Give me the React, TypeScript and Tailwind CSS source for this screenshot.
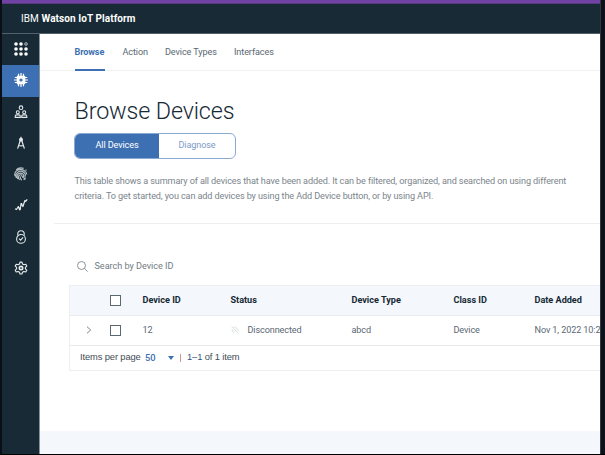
import React from "react";

const sans = "font-[Roboto,'Noto_Sans',sans-serif]";

function AppsIcon() {
  const dots: React.ReactNode[] = [];
  for (let r = 0; r < 3; r++) {
    for (let c = 0; c < 3; c++) {
      const hollow = r === 0 && c === 2;
      dots.push(
        <circle key={r * 3 + c} cx={2 + c * 5} cy={2 + r * 5} r={hollow ? 1.3 : 1.8}
          fill={hollow ? "none" : "#fff"} stroke={hollow ? "#c5ced3" : "none"} strokeWidth={0.9} />
      );
    }
  }
  return <svg width="14" height="14" viewBox="0 0 14 14">{dots}</svg>;
}

function ChipIcon() {
  return (
    <svg width="14" height="14" viewBox="0 0 14 14">
      <path d="M4.500 .8v12.400M7 0v14M9.500 .8v12.400M.8 4.500h12.400M0 7h14M.8 9.500h12.400" stroke="#fff" strokeWidth="1.200" />
      <rect x="2.700" y="2.700" width="8.600" height="8.600" rx="1" fill="#fff" />
      <circle cx="7" cy="7" r="1.600" fill="#3d70b2" />
    </svg>
  );
}

function MembersIcon() {
  return (
    <svg width="14" height="14" viewBox="0 0 14 14" fill="none" stroke="#e4e9eb" strokeWidth="1.1">
      <circle cx="7" cy="2.700" r="1.800" />
      <circle cx="3.800" cy="7.300" r="1.500" />
      <circle cx="10.200" cy="7.300" r="1.500" />
      <path d="M1.200 12.400v-1.200q0-1.300 1.400-1.300h2.400q1.300 0 1.300 1.300v1.200zM7.700 12.400v-1.200q0-1.300 1.300-1.300h2.400q1.400 0 1.400 1.300v1.200z" />
    </svg>
  );
}

function CompassIcon() {
  return (
    <svg width="14" height="14" viewBox="0 0 14 14" fill="none" stroke="#e4e9eb" strokeWidth="1.2">
      <path d="M7 0.8v1.6" />
      <circle cx="7" cy="3.8" r="1.4" fill="#e4e9eb" />
      <path d="M6.1 5L3.6 12.6M7.9 5l2.5 7.6M4.4 9.2q2.6 1.3 5.2 0" />
    </svg>
  );
}

function FingerprintIcon() {
  return (
    <svg width="14" height="14" viewBox="0 0 14 14" fill="none" stroke="#b3bec3" strokeWidth="1.150">
      <path d="M2.200 3Q5-.1 9.600 1.400M1 9.200Q0 5.200 3 3.600 6.300 1.100 10 3.400q2.700 1.600 2.800 4M2.400 11Q.8 7.300 3.700 5.300 7 3 9.900 5.500q2.400 2 .8 4.300M3.800 12.100Q2.100 8.200 4.500 6.700 7 5.200 9 7.200q1.400 1.600 0 2.600M5.600 13Q3.500 9.600 5.300 8.200q2-1.200 2.700.9.900 2.600 3.900 1.900M7.800 13.200Q6 11.600 6.300 9.400M9.600 12.600l1.800-.7M11.600 2.600l.8 1" />
    </svg>
  );
}

function ChartIcon() {
  return (
    <svg width="14" height="14" viewBox="0 0 14 14" fill="none" stroke="#e4e9eb" strokeWidth="1.2" strokeLinejoin="round">
      <path d="M1 10.800l1.500.700 1.800-3 1.500 3.300L7.300 5.800l1.600 2.700 2-6 .8.800L13.200 1.300" />
      <circle cx="5.800" cy="11" r=".550" />
      <circle cx="7.400" cy="6" r=".500" />
    </svg>
  );
}

function LockIcon() {
  return (
    <svg width="14" height="14" viewBox="0 0 14 14" fill="none" stroke="#dfe5e8" strokeWidth="1.1">
      <circle cx="7" cy="8.900" r="4.400" />
      <path d="M3.800 5.600V3.800Q3.800.7 7 .7t3.200 3.100v1.800M5 8.700l1.600 1.500 2.500-2.900" />
    </svg>
  );
}

function GearIcon() {
  return (
    <svg width="14" height="14" viewBox="0 0 14 14" fill="none" stroke="#e9edef" strokeWidth="1.1" strokeLinejoin="round">
      <path d="M5.500 3l.5-1.900h2L8.500 3l1.400.8 1.900-.6 1 1.800-1.400 1.300v1.600l1.400 1.300-1 1.800-1.900-.6-1.400.8-.5 1.800H6l-.5-1.800-1.400-.8-1.900.6-1-1.800 1.400-1.300V6.300L1.200 5l1-1.800 1.900.6z" />
      <circle cx="7" cy="7.100" r="1.700" strokeWidth="1.600" />
    </svg>
  );
}

const sideItems = [AppsIcon, ChipIcon, MembersIcon, CompassIcon, FingerprintIcon, ChartIcon, LockIcon, GearIcon];

function Checkbox() {
  return <span className="block size-[11px] border border-[#5a6872] bg-white" />;
}

function StatusIcon() {
  return (
    <svg width="8" height="8" viewBox="0 0 8 8" fill="none" stroke="#d9e0e2" strokeWidth="0.9">
      <path d="M.5.5l7 7M2.200 1.200q2.400-1 4 1.200t.6 3M1.200 3.200q-.8 3 2 4M3 3.200l2.300 2.300M4.200 2.600l1.300 1.300M2.300 4.400l1.400 1.400" />
    </svg>
  );
}

const columns = "grid grid-cols-[40px_32.500px_88px_121px_102px_81px_120px] items-center";

export default function App() {
  return (
    <div className={`flex h-[455px] w-[605px] flex-col overflow-hidden border-b border-l-2 border-b-black border-l-[#0a0e16] bg-white ${sans} text-[9.100px] tracking-[-0.110px] text-[#5a6872]`}>
      <div className="flex min-h-0 flex-1">
        <div className="flex min-w-0 flex-1 flex-col">
          <div className="h-1 shrink-0 border-b border-[#573d7e] bg-[#7042a6]" />
          <header className="flex h-[30px] shrink-0 items-center border-b border-[#52616a] bg-[#172a35] pl-[19px] text-[10px] leading-none text-white">
            <span className="whitespace-pre tracking-[0.080px]">IBM <b className="font-bold">Watson IoT Platform</b></span>
          </header>
          <div className="flex min-h-0 flex-1">
            <nav className="flex w-[38px] shrink-0 flex-col border-r border-[#87949a] bg-[#172a35]">
              {sideItems.map((Icon, i) => (
                <div key={i} className={`flex h-[31.250px] shrink-0 items-center justify-center pb-px ${i === 1 ? "bg-[#3d70b2]" : ""}`}>
                  <Icon />
                </div>
              ))}
            </nav>
            <main className="flex min-w-0 flex-1 flex-col overflow-hidden">
              <div className="flex h-[37px] shrink-0 gap-[18px] border-b border-[#f0f1f2] pl-[34.500px] leading-[36px]">
                <span className="h-[37px] w-[30px] shrink-0 whitespace-nowrap border-b-2 border-[#3d70b2] font-bold text-[#3d70b2]">Browse</span>
                <span className="w-[24.500px] whitespace-nowrap">Action</span>
                <span className="w-[51px] whitespace-nowrap">Device Types</span>
                <span className="whitespace-nowrap">Interfaces</span>
              </div>
              <h1 className="mt-[25px] h-[30px] pl-[34.500px] text-[23.300px] leading-[30px] font-light tracking-[-0.120px] text-[#152935]">Browse Devices</h1>
              <div className="mt-[7px] ml-[34px] flex h-[26px] w-[162px] shrink-0 overflow-hidden rounded-[6px] border border-[#8aa9d1] leading-[22px]">
                <span className="w-[84px] bg-[#3d70b2] text-center text-white">All Devices</span>
                <span className="flex-1 text-center text-[#7d9bc9]">Diagnose</span>
              </div>
              <p className="mt-[15px] ml-[34.500px] h-[49px] shrink-0 whitespace-nowrap leading-[15px] text-[#7b858c]">
                This table shows a summary of all devices that have been added. It can be filtered, organized, and searched on using different<br />
                criteria. To get started, you can add devices by using the Add Device button, or by using API.
              </p>
              <div className="ml-[14px] h-px shrink-0 bg-[#eeeff0]" />
              <div className="mt-[35px] ml-[37px] flex h-[14px] shrink-0 items-center gap-[6.500px] text-[#717c84]">
                <svg width="11" height="11" viewBox="0 0 11 11" fill="none" stroke="#7b868d" strokeWidth="0.9">
                  <circle cx="4.500" cy="4.500" r="4" />
                  <path d="M7.400 7.400l3.200 3.200" />
                </svg>
                <span className="pt-px tracking-[-0.030px]">Search by Device ID</span>
              </div>
              <section className="mt-3 ml-[29px] w-[600px] shrink-0 border border-[#eceef0]">
                <div className={`${columns} h-[30px] border-b border-[#e8ebed] bg-[#f4f7fb] font-bold tracking-normal text-[#152935]`}>
                  <span />
                  <Checkbox />
                  <span>Device ID</span>
                  <span>Status</span>
                  <span>Device Type</span>
                  <span>Class ID</span>
                  <span>Date Added</span>
                </div>
                <div className={`${columns} h-[30px] border-b border-[#e8ebed]`}>
                  <svg className="ml-4 -mt-px" width="6" height="8" viewBox="0 0 6 8" fill="none" stroke="#6b7780" strokeWidth="0.9">
                    <path d="M1 .7L4.700 4 1 7.300" />
                  </svg>
                  <Checkbox />
                  <span>12</span>
                  <span className="flex items-center gap-[9px]"><StatusIcon />Disconnected</span>
                  <span>abcd</span>
                  <span>Device</span>
                  <span className="whitespace-nowrap">Nov 1, 2022 10:2</span>
                </div>
                <div className="flex h-[24px] items-center whitespace-nowrap pl-[10px] font-['Liberation_Sans',Arial,sans-serif] text-[9.330px] text-[#3f4c56]">
                  <span className="w-[65px]">Items per page</span>
                  <span className={`w-[23px] text-[#3d70b2] ${sans} font-medium`}>50</span>
                  <span className="mr-[6px] border-x-[3px] border-t-[4px] border-x-transparent border-t-[#3d70b2]" />
                  <span className="h-2 w-px bg-[#cf9a8c]" />
                  <span className="ml-[6px]"><span className="text-[#35577f]">1–1</span> of 1 item</span>
                </div>
              </section>
              <div className="mt-auto h-[23px] shrink-0 bg-[#f4f7fb]" />
            </main>
          </div>
        </div>
        <div className="w-[5px] shrink-0 border-l border-[#303840] bg-[#0d1119]" />
      </div>
    </div>
  );
}
